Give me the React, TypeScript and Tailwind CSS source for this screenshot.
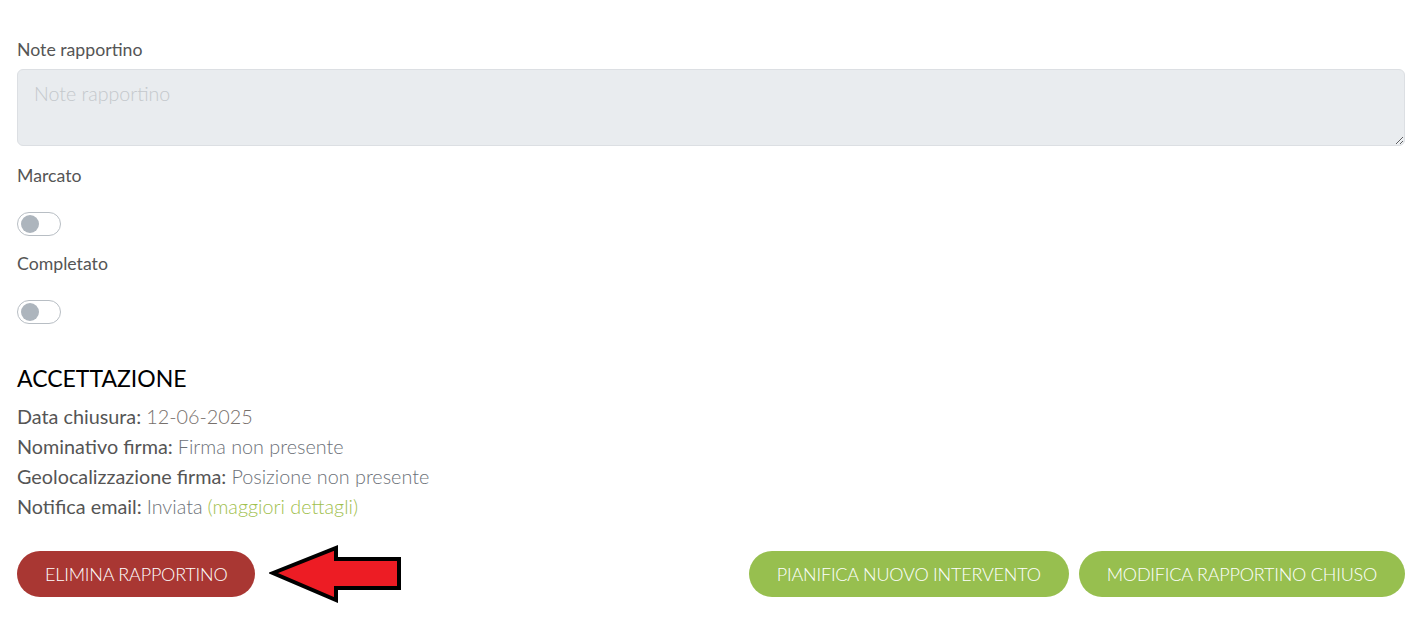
import React from "react";

function Toggle() {
  return (
    <div className="w-[44px] h-[24px] rounded-full border border-[#b8bec4] bg-white flex items-center px-[3px]">
      <div className="w-[18px] h-[18px] rounded-full bg-[#adb5bd]" />
    </div>
  );
}

function Arrow() {
  return (
    <svg width="134" height="58" viewBox="0 0 134 58" className="block">
      <polygon
        points="4,28 67,3 67,14 130,14 130,43 67,43 67,55"
        fill="#ed1c24"
        stroke="#000"
        strokeWidth="4"
        strokeLinejoin="miter"
      />
    </svg>
  );
}

export default function App() {
  return (
    <div className="w-[1420px] h-[617px] bg-white pl-[17px] pr-[15px] pt-[38px] font-['Lato','Liberation_Sans',sans-serif]">
      <div className="text-[17.7px] leading-[24px] text-[#555]">Note rapportino</div>
      <textarea
        placeholder="Note rapportino"
        className="mt-[7px] block w-full h-[77px] rounded-[6px] border border-[#dcdfe3] bg-[#e9ecef] px-[16px] py-[11px] text-[19.6px] font-light leading-[26px] placeholder:text-[#c4c8cc] outline-none resize-y"
        disabled
      />
      <div className="mt-[18px] text-[17.7px] leading-[24px] text-[#555]">Marcato</div>
      <div className="mt-[24px]">
        <Toggle />
      </div>
      <div className="mt-[16px] text-[17.7px] leading-[24px] text-[#555]">Completato</div>
      <div className="mt-[24px]">
        <Toggle />
      </div>
      <h3 className="mt-[41px] text-[23px] leading-[26px] text-black font-normal">ACCETTAZIONE</h3>
      <div className="mt-[10px] text-[19.8px] leading-[30px]">
        <div>
          <span className="text-[#555] font-normal">Data chiusura:</span>{" "}
          <span className="text-[#77706c] font-light">12-06-2025</span>
        </div>
        <div>
          <span className="text-[#555] font-normal">Nominativo firma:</span>{" "}
          <span className="text-[#6c7178] font-light">Firma non presente</span>
        </div>
        <div>
          <span className="text-[#555] font-normal">Geolocalizzazione firma:</span>{" "}
          <span className="text-[#6c7178] font-light">Posizione non presente</span>
        </div>
        <div>
          <span className="text-[#555] font-normal">Notifica email:</span>{" "}
          <span className="text-[#6c7178] font-light">Inviata</span>{" "}
          <span className="text-[#9fc04e] font-light">(maggiori dettagli)</span>
        </div>
      </div>
      <div className="mt-[30px] flex items-center justify-between">
        <div className="flex items-center">
          <button className="h-[46px] rounded-full bg-[#a93733] px-[28px] text-[18px] font-light text-white tracking-[-0.2px]">
            ELIMINA RAPPORTINO
          </button>
          <div className="ml-[14px] -my-[6px]">
            <Arrow />
          </div>
        </div>
        <div className="flex items-center gap-[10px]">
          <button className="h-[46px] rounded-full bg-[#97bf4f] px-[28px] text-[18px] font-light text-white tracking-[-0.2px]">
            PIANIFICA NUOVO INTERVENTO
          </button>
          <button className="h-[46px] rounded-full bg-[#97bf4f] px-[28px] text-[18px] font-light text-white tracking-[-0.2px]">
            MODIFICA RAPPORTINO CHIUSO
          </button>
        </div>
      </div>
    </div>
  );
}
